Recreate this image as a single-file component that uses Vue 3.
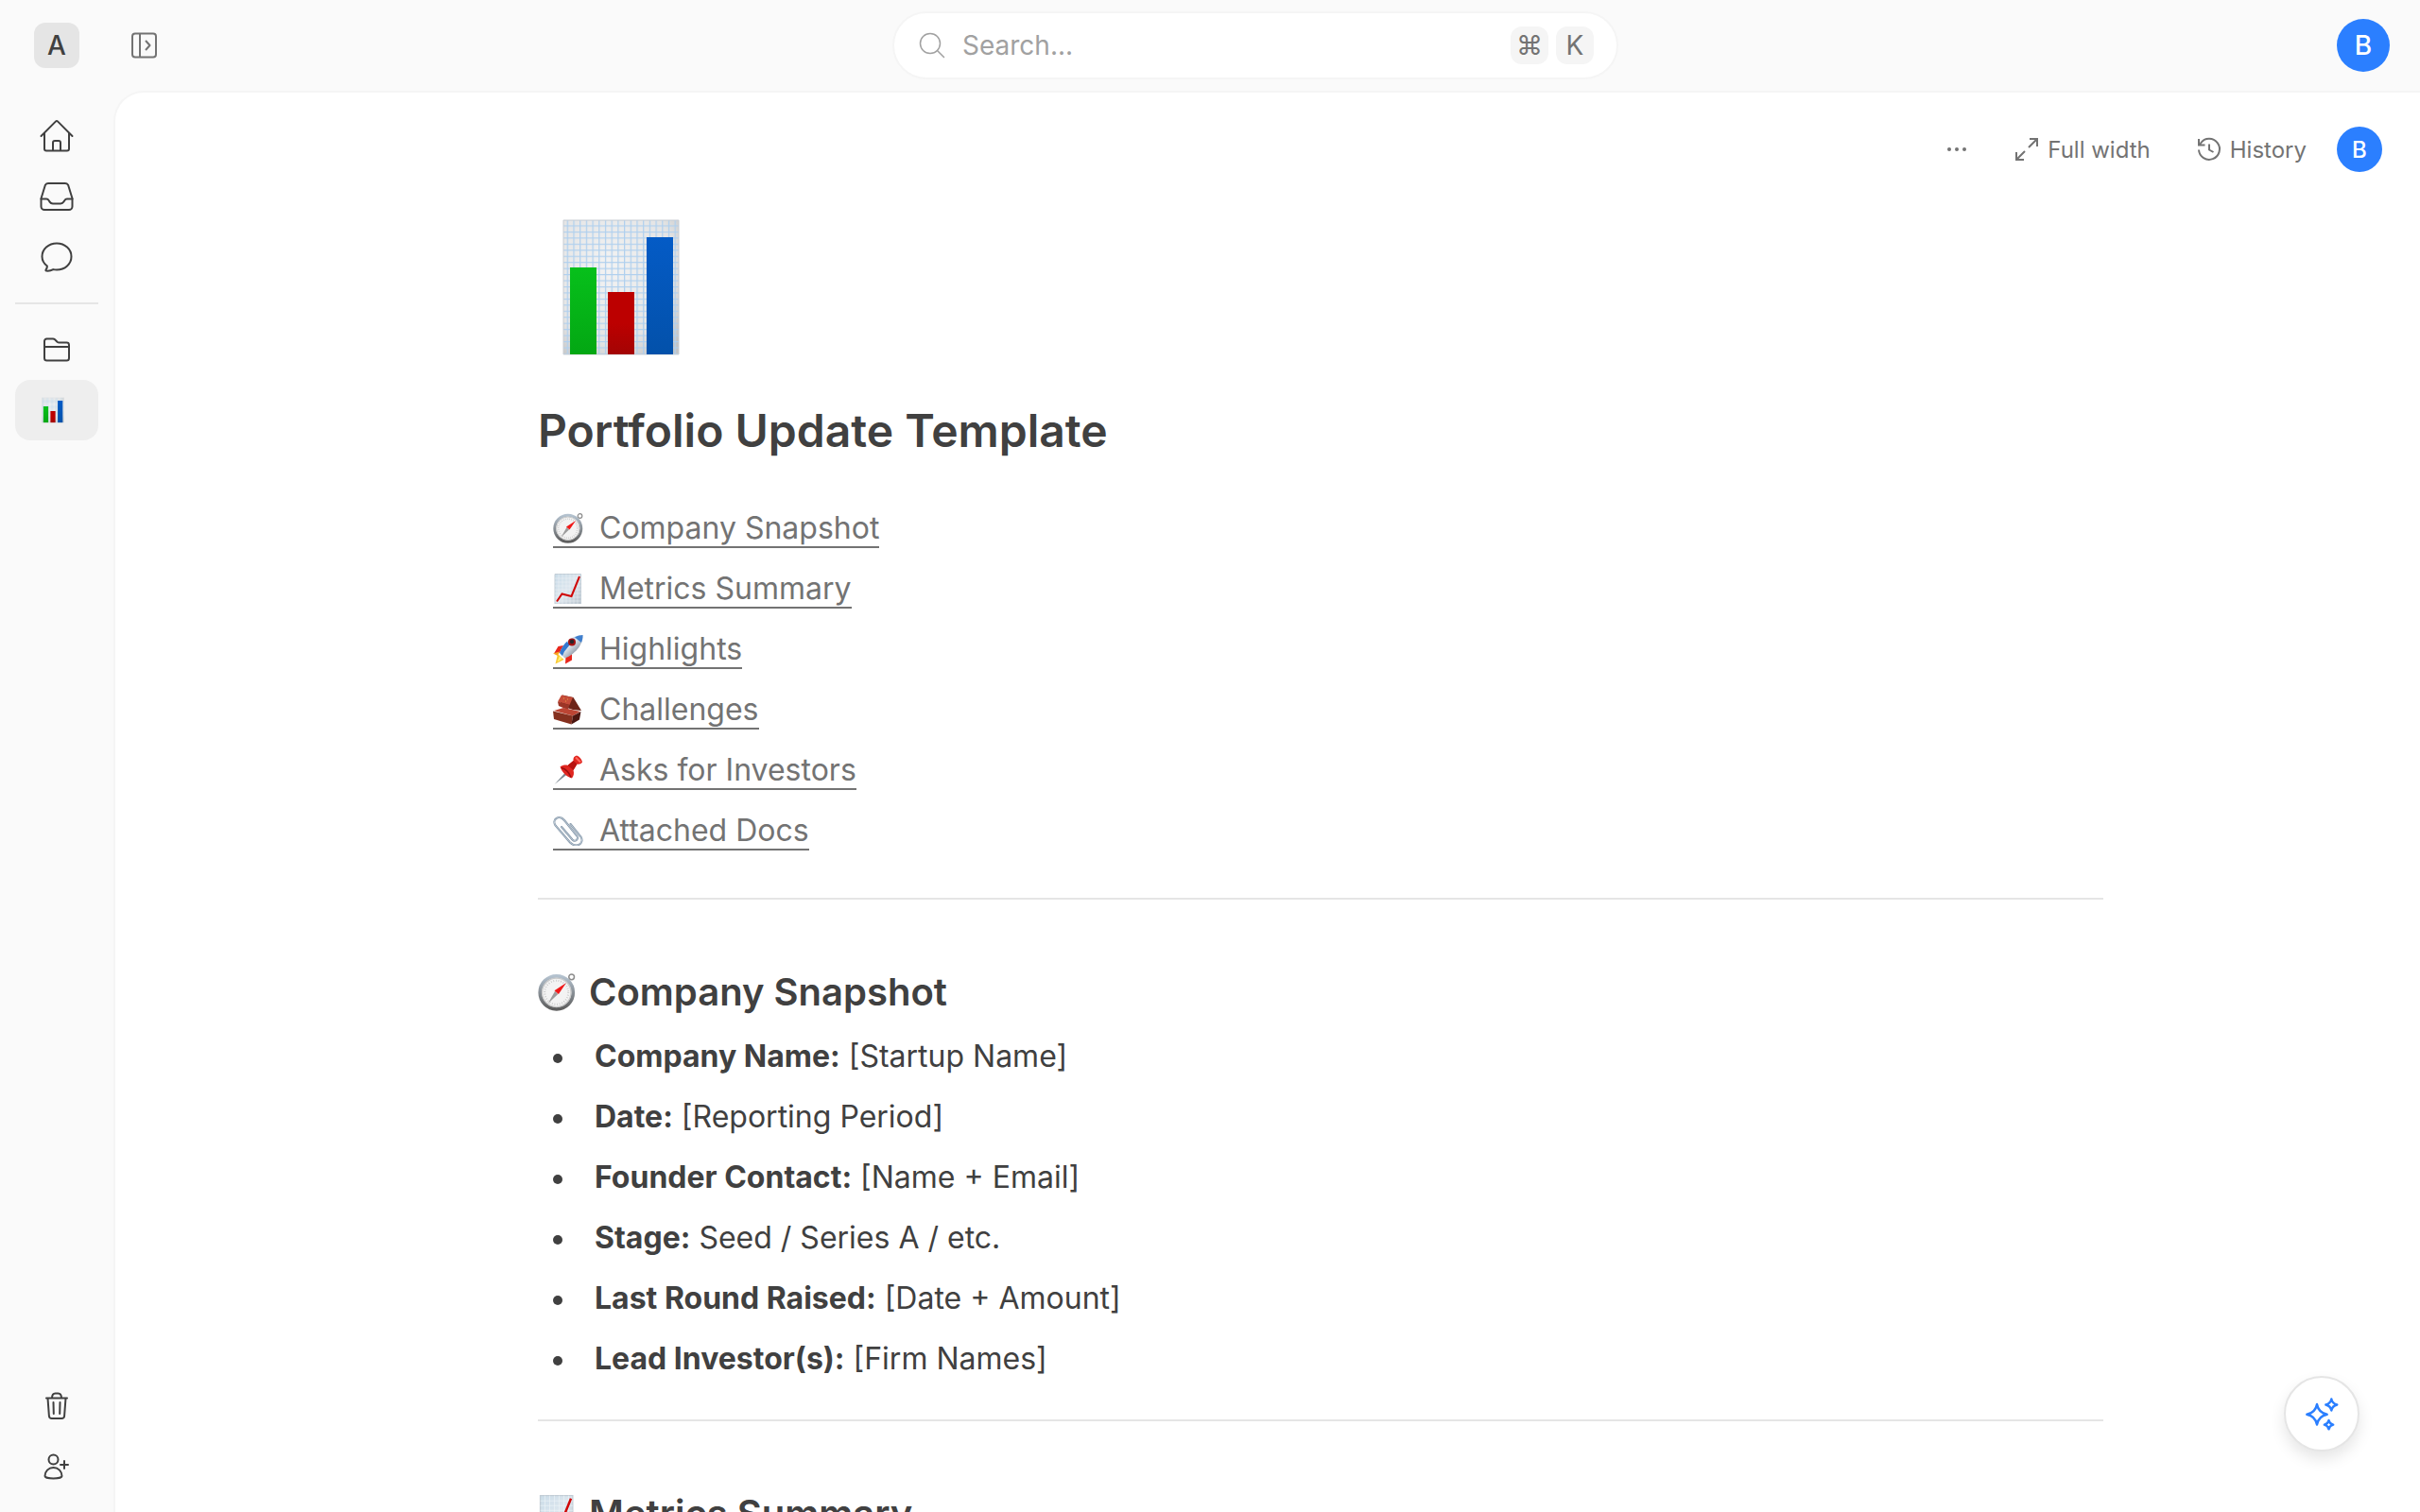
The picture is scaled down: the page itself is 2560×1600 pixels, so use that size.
<template>
  <div class="app">
    <header class="topbar">
      <button class="workspace" type="button" aria-label="Workspace">A</button>
      <div class="topbar-main">
        <button class="toggle" type="button" aria-label="Toggle sidebar">
          <svg width="28" height="28" viewBox="0 0 28 28" fill="none" stroke="currentColor" stroke-width="2">
            <rect x="2" y="1.500" width="25" height="25" rx="3" />
            <path d="M10 2v24" />
            <path d="M16 9l4.500 5-4.500 5" stroke-linejoin="round" />
          </svg>
        </button>
        <label class="search">
          <svg width="32" height="32" viewBox="0 0 32 32" fill="none" stroke="currentColor" stroke-width="1.500" stroke-linecap="round">
            <circle cx="14" cy="14" r="10.500" />
            <path d="M21.500 21.500l7 7" />
          </svg>
          <input type="text" placeholder="Search..." aria-label="Search" />
          <span class="keys">
            <kbd>⌘</kbd>
            <kbd>K</kbd>
          </span>
        </label>
        <button class="avatar avatar-large" type="button" aria-label="Account">B</button>
      </div>
    </header>

    <div class="body">
      <nav class="sidebar">
        <a class="nav-item" href="#home" aria-label="Home">
          <svg class="nav-icon" viewBox="0 0 40 40">
            <path d="M3.500 20L18.800 4.600a1.700 1.700 0 0 1 2.400 0L36.500 20" />
            <path d="M7 17v16.500a2 2 0 0 0 2 2h22a2 2 0 0 0 2-2V17M16 35.500V27a2 2 0 0 1 2-2h4a2 2 0 0 1 2 2v8.500" />
          </svg>
        </a>
        <a class="nav-item" href="#inbox" aria-label="Inbox">
          <svg class="nav-icon" viewBox="0 0 40 40">
            <path d="M3.500 22v8.500A3.500 3.500 0 0 0 7 34h26a3.500 3.500 0 0 0 3.500-3.500V22l-4.400-14.200A4 4 0 0 0 28.500 6h-17a4 4 0 0 0-3.600 1.800z" />
            <path d="M3.500 22.500H9a3 3 0 0 1 2.600 1.500l1 1.600A4 4 0 0 0 16.500 27.500h7a4 4 0 0 0 3.900-1.900l1-1.600a3 3 0 0 1 2.600-1.500h5.500" />
          </svg>
        </a>
        <a class="nav-item" href="#chat" aria-label="Chat">
          <svg class="nav-icon" viewBox="0 0 40 40">
            <path d="M20 5.500c8.700 0 15.500 6.200 15.500 14S28.700 33.500 20 33.500c-1.300 0-2.500-.1-3.700-.4-2 1.200-4.500 1.800-7.300 1.500-.6-.1-.8-.8-.4-1.300.9-1.200 1.400-2.500 1.300-3.800C6.600 27 4.500 23.500 4.500 19.500c0-7.800 6.800-14 15.500-14z" />
          </svg>
        </a>
        <hr class="nav-divider" />
        <a class="nav-item" href="#files" aria-label="Files">
          <svg class="nav-icon" viewBox="0 0 40 40">
            <path d="M7 17V11a2.500 2.500 0 0 1 2.500-2.500h6.500c.8 0 1.500.3 2 .8l2.500 2.500c.6.500 1.200.8 2 .8h8A2.500 2.500 0 0 1 33 15v14a2.500 2.500 0 0 1-2.500 2.500h-21A2.500 2.500 0 0 1 7 29zM7 17h26" />
          </svg>
        </a>
        <a class="nav-item active" href="#portfolio" aria-label="Portfolio Update Template">
          <svg class="page-icon" viewBox="0 0 128 144"><use href="#emoji-bars" /></svg>
        </a>
        <div class="nav-spacer"></div>
        <a class="nav-item" href="#trash" aria-label="Trash">
          <svg class="nav-icon" viewBox="0 0 40 40">
            <path d="M9 11.500h22M10.500 11.500l1.400 18.700A3 3 0 0 0 14.900 33h10.200a3 3 0 0 0 3-2.800l1.400-18.700M15 11.500c0-3 1.500-5 3.500-5h3c2 0 3.500 2 3.500 5M16.500 16l.3 12M23.500 16l-.3 12" />
          </svg>
        </a>
        <a class="nav-item" href="#invite" aria-label="Invite people">
          <svg class="nav-icon" viewBox="0 0 40 40">
            <circle cx="16.500" cy="12.500" r="5" />
            <path d="M7.500 30c0-5 3.800-9 9-9s9 4 9 9c0 1.500-4.500 2.500-9 2.500S7.500 31.500 7.500 30zM28 14v8M24 18h8" />
          </svg>
        </a>
      </nav>

      <main class="page">
        <div class="page-actions">
          <button class="action" type="button" aria-label="More">
            <svg width="24" height="24" viewBox="0 0 24 24" fill="currentColor">
              <circle cx="4" cy="12" r="2" /><circle cx="12" cy="12" r="2" /><circle cx="20" cy="12" r="2" />
            </svg>
          </button>
          <button class="action" type="button">
            <svg class="action-icon" viewBox="0 0 28 28">
              <path d="M16 12l9-9M17 3h8v8M12 16l-9 9M3 17v8h8" />
            </svg>
            Full width
          </button>
          <button class="action" type="button">
            <svg class="action-icon" viewBox="0 0 28 28">
              <path d="M3 14.500a11 11 0 1 0 2-7L3.500 9.500M3 3v6.500h6.500M14 8.500v6l4.500 2.500" />
            </svg>
            History
          </button>
          <button class="avatar" type="button" aria-label="Collaborators">B</button>
        </div>

        <article class="document">
          <svg class="cover-icon" viewBox="0 0 128 144"><use href="#emoji-bars" /></svg>
          <h1>Portfolio Update Template</h1>
          <ul class="toc">
            <li v-for="entry in contents" :key="entry.title">
              <a :href="'#' + entry.emoji">
                <svg class="emoji" viewBox="0 0 32 32"><use :href="'#emoji-' + entry.emoji" /></svg>{{ entry.title }}</a>
            </li>
          </ul>
          <hr />
          <h2 id="compass">
            <svg class="emoji" viewBox="0 0 32 32"><use href="#emoji-compass" /></svg>Company Snapshot
          </h2>
          <ul class="facts">
            <li v-for="fact in facts" :key="fact.label">
              <span><strong>{{ fact.label }}</strong> {{ fact.value }}</span>
            </li>
          </ul>
          <hr />
          <h2 id="chart">
            <svg class="emoji" viewBox="0 0 32 32"><use href="#emoji-chart" /></svg>Metrics Summary
          </h2>
        </article>
      </main>
    </div>

    <button class="assistant" type="button" aria-label="Assistant">
      <svg width="40" height="40" viewBox="0 0 40 40" fill="none" stroke="currentColor" stroke-width="2.400" stroke-linejoin="round">
        <path d="M15 10c1.200 6.500 4.200 9.500 10.700 10.700C19.200 22 16.200 25 15 31.500 13.800 25 10.800 22 4.300 20.700 10.800 19.500 13.800 16.500 15 10z" />
        <path d="M30.300 4.500c.8 3.800 2.200 5.200 6 6-3.800.8-5.200 2.200-6 6-.8-3.800-2.200-5.200-6-6 3.800-.8 5.200-2.200 6-6z" />
        <path d="M27.500 27c.7 3 1.700 4 4.700 4.700-3 .7-4 1.700-4.700 4.700-.7-3-1.700-4-4.700-4.700 3-.7 4-1.700 4.700-4.700z" />
      </svg>
    </button>

    <!-- shared emoji drawings -->
    <svg class="sprites" aria-hidden="true">
      <defs>
        <radialGradient id="paper" cx=".4" cy=".35" r=".8">
          <stop offset="0" stop-color="#f3f3f3" />
          <stop offset=".7" stop-color="#e4e4e4" />
          <stop offset="1" stop-color="#c4c4c4" />
        </radialGradient>
        <pattern id="grid" width="6.700" height="6.450" patternUnits="userSpaceOnUse">
          <path d="M0 .6h6.700M.6 0v6.450" stroke="#b0d0ee" stroke-width="1.300" />
        </pattern>
        <linearGradient id="green" x2="0" y2="1">
          <stop offset="0" stop-color="#07c01b" /><stop offset="1" stop-color="#03a713" />
        </linearGradient>
        <linearGradient id="red" x2="0" y2="1">
          <stop offset=".5" stop-color="#bc0000" /><stop offset="1" stop-color="#a30404" />
        </linearGradient>
        <linearGradient id="blue" x2="0" y2="1">
          <stop offset="0" stop-color="#045bc6" /><stop offset="1" stop-color="#0351aa" />
        </linearGradient>
        <linearGradient id="rim" x2="0" y2="1">
          <stop offset="0" stop-color="#b4c2cf" /><stop offset="1" stop-color="#5e5e5e" />
        </linearGradient>
        <linearGradient id="sheet" x2="1" y2="1">
          <stop offset="0" stop-color="#cbdde9" /><stop offset=".5" stop-color="#dce6ee" /><stop offset="1" stop-color="#b9c4cd" />
        </linearGradient>
        <linearGradient id="hull" x2="1" y2="1">
          <stop offset="0" stop-color="#3f8fe0" /><stop offset=".45" stop-color="#dde6ee" /><stop offset="1" stop-color="#4a5566" />
        </linearGradient>

        <symbol id="emoji-bars" viewBox="0 0 128 144">
          <path d="M3 1h122v142H3z" fill="url(#paper)" />
          <path d="M3 1h122v142H3z" fill="url(#grid)" />
          <path d="M3 1h122v142H3z" fill="none" stroke="#c9cdd2" />
          <path d="M10 51h28v92H10z" fill="url(#green)" />
          <path d="M50 77h28v66H50z" fill="url(#red)" />
          <path d="M91 19h28v124H91z" fill="url(#blue)" />
        </symbol>

        <symbol id="emoji-compass" viewBox="0 0 32 32">
          <circle cx="28.500" cy="3" r="2.300" fill="none" stroke="#8d8d8d" stroke-width="1.200" />
          <circle cx="15.800" cy="16.200" r="14" fill="#f3f3f3" stroke="url(#rim)" stroke-width="3" />
          <circle cx="15.800" cy="16.200" r="12.200" fill="none" stroke="#c9c9c9" stroke-width="1" />
          <circle cx="15.800" cy="16.200" r="10" fill="none" stroke="#c4c4c4" stroke-width="1.600" stroke-dasharray=".6 1.500" />
          <path d="M14.500 15l2.500 2.500L8.500 25.500z" fill="#9b9b9b" />
          <path d="M14 14.500L24 8l-6.500 9.500z" fill="#f01818" />
        </symbol>

        <symbol id="emoji-chart" viewBox="0 0 32 32">
          <path d="M2 .5h27.500v31.500H2z" fill="url(#sheet)" stroke="#c2cdd6" />
          <path d="M6 .5V32M10 .5V32M14 .5V32M18 .5V32M22 .5V32M26 .5V32M2 5h27.500M2 9h27.500M2 13h27.500M2 17h27.500M2 21h27.500M2 25h27.500M2 29h27.500" stroke="#edf3f7" stroke-width=".5" />
          <path d="M4 29.500l5.500-8 10 2.500L28 3" fill="none" stroke="#d00808" stroke-width="2" />
        </symbol>

        <symbol id="emoji-rocket" viewBox="0 0 32 32">
          <path d="M11 12L5.500 13 1 20.500l8-1zM20 21v6.500l-7 4 .5-8z" fill="#e8261c" />
          <path d="M0 20.500l7-2-2 4.500z" fill="#f5a623" />
          <path d="M5 21l6.500 6L2.500 31.500z" fill="#fbc830" />
          <path d="M7 23l3 3-5.500 3.500z" fill="#fff27a" />
          <path d="M7 20C10 11 19 1 31.500 1 32 12 22 22 12.500 25.500z" fill="url(#hull)" />
          <path d="M23 3.500C26 1.700 29 1 31.500 1c.1 3-.5 5.500-1.500 8z" fill="#3f7fce" />
          <path d="M7 20c1.500-4.500 4-8.500 7.500-12l3.500 3-6 7.500-2 4.500z" fill="#3479cf" />
          <circle cx="20" cy="8.500" r="4" fill="#a31313" />
          <circle cx="20" cy="8" r="2.200" fill="#26262b" />
        </symbol>

        <symbol id="emoji-brick" viewBox="0 0 32 32">
          <path d="M10 .5L21.500 3 30 17l-9-1-14-4.500z" fill="#6e2418" />
          <path d="M9 .5L21 3l-3.500 8L5 7.500z" fill="#c44b38" />
          <path d="M5 7.500L17.500 11l-2 5L6 12z" fill="#9c3526" />
          <path d="M1 17l10-3 18 4-8 4.500z" fill="#bc4534" />
          <path d="M0 17.500l21 5-1.500 9L1 26z" fill="#85301f" />
          <path d="M21 22.500l8.500-4.500-1.500 8.500-8.500 5z" fill="#4b1610" />
          <path d="M11 4h1M15 5h1M13 7h1" stroke="#e8a040" />
        </symbol>

        <symbol id="emoji-pin" viewBox="0 0 32 32">
          <path d="M1.500 31l12-13 2 2z" fill="#7b8790" />
          <path d="M7.500 12.500c3-2 6-2.500 8-1.500l6-5c-.5-3 1-5 3.500-5.500 3 1 5.500 4 6 7-1.500 2-3.500 2.500-5.500 2l-4 6.500c1 3 .5 6-1.500 8.500C14 23 9.500 18 7.500 12.500z" fill="#e02620" />
          <path d="M15.500 11l6-5 4 3.500-4 6.500z" fill="#b81410" />
          <path d="M9 13.500c4 1 8 5 10 10" fill="none" stroke="#9c0e0e" stroke-width="1.500" />
          <path d="M24 2.500l5 5" stroke="#ff6a5c" stroke-width="2" />
        </symbol>

        <symbol id="emoji-clip" viewBox="0 0 32 32">
          <path d="M9 12l11.500 13.500c2.800 3 7-.5 4.800-4L12 5C6.500-1.500-1.500 4 2.500 10.500L18 28.500c7 6.500 15.500 1 11.500-6L18.500 9" fill="none" stroke="#7d90a3" stroke-width="2" stroke-linecap="round" />
          <path d="M9 12l11.500 13.500c2.800 3 7-.5 4.800-4L12 5C6.500-1.500-1.500 4 2.500 10.500L18 28.500c7 6.500 15.500 1 11.500-6L18.500 9" fill="none" stroke="#cfdae4" stroke-width=".8" stroke-linecap="round" />
        </symbol>
      </defs>
    </svg>
  </div>
</template>

<script setup>
const contents = [
  { emoji: 'compass', title: 'Company Snapshot' },
  { emoji: 'chart', title: 'Metrics Summary' },
  { emoji: 'rocket', title: 'Highlights' },
  { emoji: 'brick', title: 'Challenges' },
  { emoji: 'pin', title: 'Asks for Investors' },
  { emoji: 'clip', title: 'Attached Docs' }
]

const facts = [
  { label: 'Company Name:', value: '[Startup Name]' },
  { label: 'Date:', value: '[Reporting Period]' },
  { label: 'Founder Contact:', value: '[Name + Email]' },
  { label: 'Stage:', value: 'Seed / Series A / etc.' },
  { label: 'Last Round Raised:', value: '[Date + Amount]' },
  { label: 'Lead Investor(s):', value: '[Firm Names]' }
]
</script>

<style>
body {
  margin: 0;
  background: #fafafa;
}
</style>

<style scoped>
.app {
  display: flex;
  flex-direction: column;
  height: 100vh;
  overflow: hidden;
  font-family: Inter, sans-serif;
  color: #404040;
  background: #fafafa;
}

button,
input,
kbd {
  font-family: inherit;
}

button {
  display: flex;
  align-items: center;
  justify-content: center;
  padding: 0;
  border: none;
  background: none;
  color: inherit;
  cursor: pointer;
}

.topbar {
  display: flex;
  align-items: center;
  gap: 44px;
  flex: none;
  height: 96px;
  padding: 0 32px 0 36px;
}

.topbar-main {
  display: grid;
  grid-template-columns: 1fr 768px 1fr;
  align-items: center;
  flex: 1;
}

.workspace {
  width: 48px;
  height: 48px;
  border-radius: 12px;
  background: #e5e5e5;
  font-size: 28px;
  font-weight: 500;
}

.toggle {
  justify-self: start;
  padding: 0 10px;
  color: #737373;
}

.search {
  display: flex;
  align-items: center;
  gap: 16px;
  box-sizing: border-box;
  height: 72px;
  padding: 0 24px;
  border: 2px solid #f5f5f5;
  border-radius: 36px;
  background: #fff;
  color: #a1a1a1;
}

.search input {
  flex: 1;
  min-width: 0;
  padding: 0;
  border: none;
  outline: none;
  background: none;
  font-size: 28px;
  color: #404040;
}

.search input::placeholder {
  color: #a1a1a1;
  opacity: 1;
}

.keys {
  display: flex;
  gap: 8px;
}

.keys kbd {
  width: 40px;
  border-radius: 12px;
  background: #f5f5f5;
  color: #737373;
  font-size: 28px;
  line-height: 40px;
  text-align: center;
}

.avatar {
  width: 48px;
  height: 48px;
  border-radius: 50%;
  background: #2b7fff;
  color: #fff;
  font-size: 24px;
  font-weight: 500;
}

.avatar-large {
  justify-self: end;
  width: 56px;
  height: 56px;
  font-size: 28px;
}

.body {
  display: flex;
  flex: 1;
  min-height: 0;
}

.sidebar {
  display: flex;
  flex-direction: column;
  flex: none;
  box-sizing: border-box;
  width: 120px;
  padding: 16px;
}

.nav-item {
  display: flex;
  align-items: center;
  justify-content: center;
  height: 64px;
  border-radius: 16px;
  color: #404040;
}

.nav-item.active {
  justify-content: flex-start;
  padding-left: 28px;
  background: #eeeeee;
}

.nav-icon {
  width: 40px;
  height: 40px;
  fill: none;
  stroke: currentColor;
  stroke-width: 2;
  stroke-linecap: round;
  stroke-linejoin: round;
}

.page-icon {
  width: 24px;
  height: 28px;
}

.nav-divider {
  width: 100%;
  height: 2px;
  margin: 16px 0;
  border: none;
  background: #e5e5e5;
}

.nav-spacer {
  flex: 1;
}

.page {
  flex: 1;
  min-width: 0;
  overflow: hidden;
  border: 2px solid #f5f5f5;
  border-width: 2px 0 0 2px;
  border-radius: 32px 0 0 0;
  background: #fff;
}

.page-actions {
  display: flex;
  justify-content: flex-end;
  padding: 36px 40px 0;
}

.action {
  gap: 8px;
  margin-right: 48px;
  color: #737373;
  font-size: 24px;
}

.action:nth-child(3) {
  margin-right: 32px;
}

.action-icon {
  width: 28px;
  height: 28px;
  fill: none;
  stroke: currentColor;
  stroke-width: 2;
}

.document {
  max-width: 1656px;
  margin: 0 auto;
  padding: 50px 0 0 112px;
}

.cover-icon {
  display: block;
  width: 128px;
  height: 144px;
  margin-left: 24px;
}

h1 {
  margin: 48px 0 40px;
  font-size: 48px;
  line-height: 64px;
  font-weight: 600;
}

.toc,
.facts {
  margin: 0;
  padding: 0;
  list-style: none;
  font-size: 32px;
  line-height: 64px;
}

.toc {
  padding-bottom: 6px;
}

.toc li {
  display: flex;
  padding-left: 16px;
}

.toc a {
  display: flex;
  align-items: center;
  height: 40px;
  margin: 12px 0;
  border-bottom: 2px solid #737373;
  box-sizing: border-box;
  color: #737373;
  text-decoration: none;
}

.toc .emoji {
  width: 32px;
  height: 32px;
  margin-right: 17px;
}

.document hr {
  height: 2px;
  margin: 32px 0 62px;
  border: none;
  background: #e5e5e5;
}

.document h2 {
  display: flex;
  align-items: center;
  gap: 14px;
  margin: 0;
  font-size: 40px;
  line-height: 72px;
  font-weight: 600;
}

h2 .emoji {
  width: 40px;
  height: 40px;
}

.facts li {
  display: flex;
  align-items: center;
  padding-left: 16px;
}

.facts li::before {
  content: '';
  width: 10px;
  height: 10px;
  margin: 4px 34px 0 0;
  border-radius: 50%;
  background: #404040;
}

.facts strong {
  font-weight: 700;
}

.assistant {
  position: absolute;
  right: 64px;
  bottom: 64px;
  width: 80px;
  height: 80px;
  border: 2px solid #e5e5e5;
  border-radius: 50%;
  background: #fff;
  color: #2b7fff;
  box-shadow: 0 8px 16px rgba(0, 0, 0, 0.1);
}

.sprites {
  position: absolute;
  width: 0;
  height: 0;
}
</style>
